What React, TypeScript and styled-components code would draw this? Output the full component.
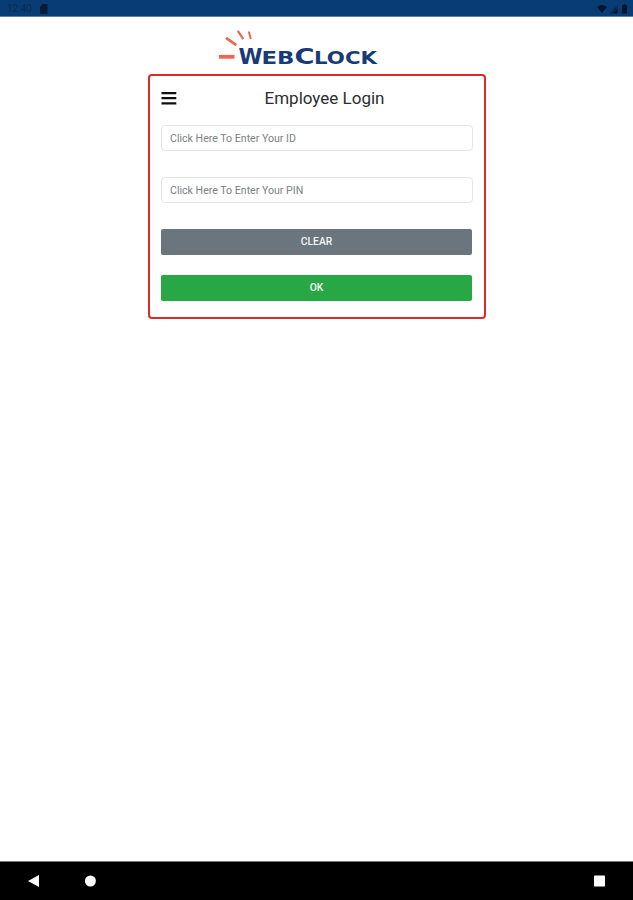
import React from "react";
import styled, { createGlobalStyle } from "styled-components";

const GlobalStyle = createGlobalStyle`
  *, *::before, *::after { box-sizing: border-box; }
  body { margin: 0; background: #fff; font-family: Roboto, sans-serif; }
`;

const Screen = styled.div`
  display: flex;
  flex-direction: column;
  height: 900px;
  width: 633px;
  overflow: hidden;
  background: #fff;
`;

const StatusBar = styled.header`
  display: flex;
  align-items: center;
  height: 17px;
  padding: 1px 4px 0 7px;
  background: #083c74;
  border-bottom: 1px solid #5e7ea2;
  color: #0a2b50;
  font-size: 10px;
  line-height: 16px;
  flex: none;
`;

const Clock = styled.span`
  width: 33px;
`;

const StatusIcons = styled.div`
  display: flex;
  margin-left: auto;
`;

const Main = styled.main`
  display: flex;
  flex-direction: column;
  flex: 1;
  padding-left: 148px;
`;

const Logo = styled.svg`
  display: block;
  margin: 10px 0 0 66px;
  flex: none;
`;

const Card = styled.form`
  display: flex;
  flex-direction: column;
  width: 338px;
  height: 245px;
  padding: 11px 11px 0;
  border: 2px solid #dc2a28;
  border-radius: 4px;
`;

const CardHeader = styled.div`
  display: grid;
  grid-template-columns: 16px 1fr;
  align-items: center;
  height: 22px;
  margin-bottom: 16px;
`;

const MenuButton = styled.button`
  display: flex;
  padding: 0;
  border: 0;
  background: none;
`;

const Title = styled.h1`
  margin: 0 0 0 -1px;
  color: #2b2e31;
  font-size: 17px;
  font-weight: 400;
  line-height: 22px;
  text-align: center;
`;

const Field = styled.input`
  width: 312px;
  height: 26px;
  margin: 0 0 26px;
  padding: 0 8px;
  border: 1px solid #e3e6e8;
  border-radius: 4px;
  background: #fff;
  font: 400 10.6px Roboto, sans-serif;
  outline: none;
  &::placeholder { color: #7b8084; opacity: 1; }
`;

const Action = styled.button<{ $color: string; $gap?: number }>`
  width: 311px;
  height: 26px;
  margin: 0 0 ${(p) => p.$gap ?? 0}px;
  padding: 0 0 1px;
  border: 0;
  border-radius: 2px;
  background: ${(p) => p.$color};
  color: #f4f6f7;
  font: 500 10.3px Roboto, sans-serif;
`;

const NavBar = styled.nav`
  display: flex;
  align-items: center;
  height: 39px;
  padding: 0 27px;
  background: #000;
  border-top: 1px solid #777;
  flex: none;
`;

const NavIcon = styled.svg<{ $left?: string }>`
  display: block;
  margin-left: ${(p) => p.$left ?? "0"};
`;

export default function App() {
  return (
    <Screen>
      <GlobalStyle />
      <StatusBar>
        <Clock>12:40</Clock>
        <svg width="8" height="10" viewBox="0 0 8 10">
          <path d="M2.5 0H7.5V10H0V2.5Z" fill="#061b35" />
        </svg>
        <StatusIcons>
          <svg width="32" height="10" viewBox="0 0 32 10" fill="#03152c">
            <path d="M0 3Q5 -1 10 3L5 9Z" />
            <path d="M12.5 9.5L20.5 1V9.5Z" fill="#09294e" />
            <path d="M16 9.5L20.5 5V9.5Z" />
            <path d="M25 1H26.5V0H28.5V1H30V9.5H25Z" />
          </svg>
        </StatusIcons>
      </StatusBar>

      <Main>
        <Logo width="168" height="47" viewBox="214 27 168 47" role="img" aria-label="WebClock">
          <g stroke="#e9694f" fill="none">
            <path d="M219 56.8H234.5" strokeWidth="3.8" />
            <path d="M226 37.8L236.3 45.2" strokeWidth="2.7" />
            <path d="M237.8 30.8L243.3 39.2" strokeWidth="2.2" />
            <path d="M248.8 31.5L250.8 39" strokeWidth="2" />
          </g>
          <g
            fill="#183b76"
            fontFamily="'DejaVu Sans', sans-serif"
            fontWeight="700"
          >
            <text x="238.5" y="64" fontSize="20.5" textLength="24" lengthAdjust="spacingAndGlyphs">W</text>
            <text x="261.5" y="64" fontSize="17" textLength="33" lengthAdjust="spacingAndGlyphs">EB</text>
            <text x="294.5" y="64" fontSize="20.5" textLength="20" lengthAdjust="spacingAndGlyphs">C</text>
            <text x="314" y="64" fontSize="17" textLength="63" lengthAdjust="spacingAndGlyphs">LOCK</text>
          </g>
        </Logo>

        <Card onSubmit={(e) => e.preventDefault()}>
          <CardHeader>
            <MenuButton type="button" aria-label="Menu">
              <svg width="16" height="14" viewBox="0 0 16 14" stroke="#111" strokeWidth="2.3">
                <path d="M0.5 2.2H15.3M0.5 7.2H15.3M0.5 12.3H15.3" />
              </svg>
            </MenuButton>
            <Title>Employee Login</Title>
          </CardHeader>
          <Field placeholder="Click Here To Enter Your ID" />
          <Field placeholder="Click Here To Enter Your PIN" />
          <Action type="reset" $color="#6b757d" $gap={20}>CLEAR</Action>
          <Action type="submit" $color="#28a745">OK</Action>
        </Card>
      </Main>

      <NavBar>
        <NavIcon width="13" height="14" viewBox="0 0 13 14">
          <path d="M1 7L12 1V13Z" fill="#fff" />
        </NavIcon>
        <NavIcon $left="44px" width="13" height="14" viewBox="0 0 13 14">
          <circle cx="6.4" cy="7" r="5.5" fill="#fff" />
        </NavIcon>
        <NavIcon $left="auto" width="13" height="14" viewBox="0 0 13 14">
          <rect x="1" y="1.5" width="11" height="11" rx="0.7" fill="#fff" />
        </NavIcon>
      </NavBar>
    </Screen>
  );
}
